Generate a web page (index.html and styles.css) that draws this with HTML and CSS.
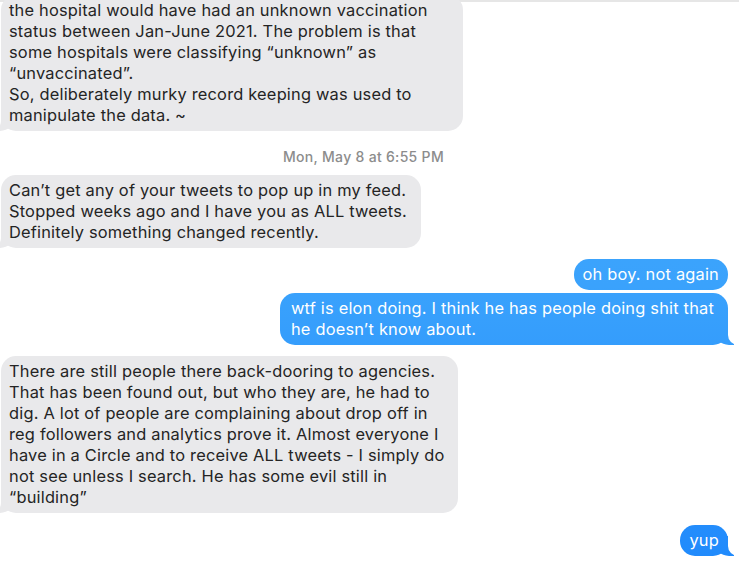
FILE: index.html
```html
<!DOCTYPE html>
<html lang="en">
<head>
<meta charset="utf-8">
<title>Messages</title>
<link rel="stylesheet" href="styles.css">
</head>
<body>
<div class="topline"></div>
<main class="thread">
  <div class="bubble them first tail wide">the hospital would have had an unknown vaccination<br>status between Jan-June 2021. The problem is that<br>some hospitals were classifying “unknown” as<br>“unvaccinated”.<br>So, deliberately murky record keeping was used to<br>manipulate the data. ~</div>

  <div class="stamp">Mon, May 8 at 6:55 PM</div>

  <div class="bubble them tail">Can’t get any of your tweets to pop up in my feed.<br>Stopped weeks ago and I have you as ALL tweets.<br>Definitely something changed recently.</div>

  <div class="bubble me group-start">oh boy. not again</div>
  <div class="bubble me tail joined roomy">wtf is elon doing. I think he has people doing shit that<br>he doesn’t know about.</div>

  <div class="bubble them tail group-start tight">There are still people there back-dooring to agencies.<br>That has been found out, but who they are, he had to<br>dig. A lot of people are complaining about drop off in<br>reg followers and analytics prove it. Almost everyone I<br>have in a Circle and to receive ALL tweets - I simply do<br>not see unless I search. He has some evil still in<br>“building”</div>

  <div class="bubble me tail group-start last">yup</div>
</main>
</body>
</html>
```

FILE: styles.css
```css
html, body {
  margin: 0;
  padding: 0;
  background: #ffffff;
  overflow: hidden;
}

body {
  font-family: "Inter", "Liberation Sans", Arial, sans-serif;
  font-size: 16.4px;
  letter-spacing: 0.2px;
  color: #242424;
}

.topline {
  position: absolute;
  top: 0;
  left: 0;
  right: 0;
  height: 2px;
  background: #e6e6e6;
}

.thread {
  display: flex;
  flex-direction: column;
  padding: 0 11px 0 1px;
}

.bubble {
  position: relative;
  z-index: 0;
  white-space: nowrap;
  line-height: 21px;
  padding: 5px 14px 5px 8px;
  border-radius: 15px;
  width: fit-content;
}

.bubble.them {
  align-self: flex-start;
  background: #e9e9eb;
  color: #242424;
}

.bubble.wide {
  padding-right: 35px;
}

.bubble.tight {
  padding-right: 13px;
}

.bubble.me {
  align-self: flex-end;
  color: #ffffff;
  padding: 5px 9px 5px 9px;
  background: linear-gradient(180deg, #45aefd 0%, #3aa2fc 50%, #1f89fc 100%) fixed;
}

.bubble.roomy {
  padding: 5px 14px 5px 11px;
}

.bubble.first {
  margin-top: -5px;
}

.bubble.group-start {
  margin-top: 11px;
}

.bubble.joined {
  margin-top: 3px;
}

.bubble.last {
  margin-top: 12px;
}

/* tails */
.bubble.tail::before,
.bubble.tail::after {
  content: "";
  position: absolute;
  z-index: -1;
  bottom: 0;
  height: 20px;
}

.bubble.them.tail::before {
  left: -6px;
  width: 20px;
  background: #e9e9eb;
  border-bottom-right-radius: 15px;
}

.bubble.them.tail::after {
  left: -26px;
  width: 26px;
  background: #ffffff;
  border-bottom-right-radius: 10px;
}

.bubble.me.tail::before {
  right: -6px;
  width: 20px;
  background: inherit;
  border-bottom-left-radius: 15px;
}

.bubble.me.tail::after {
  right: -26px;
  width: 26px;
  background: #ffffff;
  border-bottom-left-radius: 10px;
}

.stamp {
  align-self: center;
  margin: 18px 0 10px 0;
  transform: translateX(-1px);
  font-size: 14px;
  letter-spacing: 0.3px;
  line-height: 16px;
  color: #8c8c8c;
  font-weight: 500;
}
```
